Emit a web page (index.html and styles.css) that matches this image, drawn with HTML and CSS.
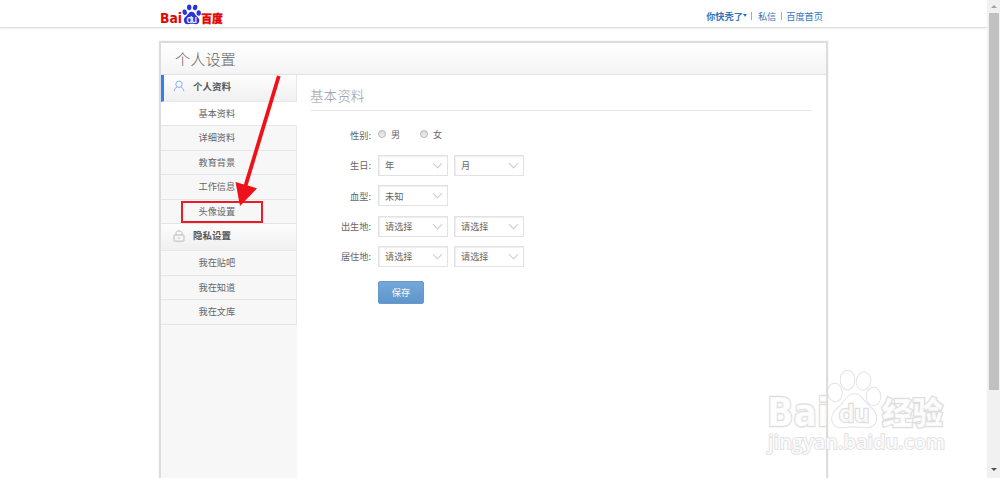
FILE: index.html
```html
<!DOCTYPE html>
<html lang="zh-CN">
<head>
  <meta charset="UTF-8">
  <title>个人设置</title>
  <link rel="stylesheet" href="styles.css">
</head>
<body>
  <div class="page">
    <div class="topbar">
      <a class="logo" href="#">
        <svg width="64" height="24" viewBox="0 0 64 24">
          <text class="logo-red logo-bai" x="0" y="20.300" font-size="13.500" textLength="22" lengthAdjust="spacingAndGlyphs">Bai</text>
          <g fill="#2932e1">
            <ellipse cx="24.700" cy="9.200" rx="2.200" ry="2.800" transform="rotate(-10 24.700 9.200)"/>
            <ellipse cx="29.200" cy="4.300" rx="2.200" ry="2.900"/>
            <ellipse cx="35.100" cy="4.500" rx="2.200" ry="2.800" transform="rotate(12 35.100 4.500)"/>
            <ellipse cx="38.700" cy="10" rx="2.200" ry="2.700"/>
            <path d="M31.600 8.800c-2.300 0-3.100 2-4.800 3.700-1.700 1.600-3.300 2.900-2.900 5.300.4 2.600 2.100 3.500 3.900 3.400 1.400-.1 2.300-.4 3.900-.4s2.600.4 4 .4c2 0 3.600-1.300 3.600-3.700 0-2.300-1.800-3.400-3.300-5.100C34.800 11 34 8.800 31.600 8.800z"/>
          </g>
          <text class="logo-du" x="26.500" y="19.500" font-size="9.500" textLength="10.500">du</text>
          <text class="logo-red" x="41.300" y="20" font-size="11.500" textLength="21.500" lengthAdjust="spacingAndGlyphs">百度</text>
        </svg>
      </a>
      <div class="user-nav">
        <a class="user-name" href="#">你快秃了<i class="caret"></i></a>
        <span class="sep sep-first"></span>
        <a href="#">私信</a>
        <span class="sep"></span>
        <a href="#">百度首页</a>
      </div>
    </div>

    <div class="panel">
      <h1>个人设置</h1>
      <div class="panel-body">
        <div class="sidebar">
          <div class="group active">
            <svg width="12" height="12" viewBox="0 0 12 12" fill="none" stroke="#82b1f5">
              <circle cx="6" cy="4.200" r="3.200"/>
              <path d="M1.200 11.200c.2-2.500 1.400-3.700 3-4.200M10.800 11.200c-.2-2.500-1.400-3.700-3-4.200"/>
            </svg>
            <span>个人资料</span>
          </div>
          <a class="item current" href="#">基本资料</a>
          <a class="item" href="#">详细资料</a>
          <a class="item" href="#">教育背景</a>
          <a class="item" href="#">工作信息</a>
          <a class="item" href="#">头像设置</a>
          <div class="group">
            <svg width="12" height="12" viewBox="0 0 12 12" fill="none" stroke="#bbb">
              <rect x="1" y="5" width="10" height="6.200" rx=".8"/>
              <path d="M3 5V3.500C3 1.800 4.200.9 6 .9s3 .9 3 2.600V5M6 7.200v1.800"/>
            </svg>
            <span>隐私设置</span>
          </div>
          <a class="item" href="#">我在贴吧</a>
          <a class="item" href="#">我在知道</a>
          <a class="item" href="#">我在文库</a>
        </div>

        <div class="content">
          <h2>基本资料</h2>
          <div class="row">
            <div class="label">性别:</div>
            <span class="radio"></span><span class="radio-text">男</span>
            <span class="radio"></span><span class="radio-text">女</span>
          </div>
          <div class="row">
            <div class="label">生日:</div>
            <div class="select">年<i></i></div>
            <div class="select">月<i></i></div>
          </div>
          <div class="row">
            <div class="label">血型:</div>
            <div class="select">未知<i></i></div>
          </div>
          <div class="row">
            <div class="label">出生地:</div>
            <div class="select">请选择<i></i></div>
            <div class="select">请选择<i></i></div>
          </div>
          <div class="row">
            <div class="label">居住地:</div>
            <div class="select">请选择<i></i></div>
            <div class="select">请选择<i></i></div>
          </div>
          <button class="save">保存</button>
        </div>
      </div>
    </div>
  </div>

  <div class="scrollbar">
    <div class="arrow up"></div>
    <div class="thumb"></div>
    <div class="arrow down"></div>
  </div>

  <!-- red box and arrow pointing at 头像设置 -->
  <svg class="marker" width="1000" height="478" viewBox="0 0 1000 478">
    <rect x="182" y="202" width="80" height="20" fill="none" stroke="#ed1c24" stroke-width="2"/>
    <path d="M277 75.500l3.600 1.100-33 108.800 9.400 3-17 17.600-4.500-24 8.400 2.600z" fill="#ed1219"/>
  </svg>

  <svg class="watermark" width="190" height="95" viewBox="0 0 190 95">
    <text class="wm-text wm-latin" x="1" y="66" font-size="39" textLength="62" lengthAdjust="spacingAndGlyphs">Bai</text>
    <g class="wm-shape">
      <ellipse cx="69" cy="32.500" rx="7" ry="9" transform="rotate(-6 69 32.500)"/>
      <ellipse cx="81.500" cy="20" rx="7" ry="9.500"/>
      <ellipse cx="97.500" cy="21" rx="7" ry="9" transform="rotate(10 97.500 21)"/>
      <ellipse cx="107.500" cy="36.500" rx="7" ry="9"/>
      <path d="M88.500 34c-6 0-8.500 5-12 9.500C72 48.500 66 51.500 66 58.500c0 7 5.500 9.500 11.500 9 4-.4 7-1 11-1s7 .8 11 1c6.500.2 11-3.500 11-9.500 0-7-6-10-10.500-15-3.500-4-5.500-9-11.500-9z"/>
    </g>
    <text class="wm-text wm-du" x="73" y="62" font-size="24" textLength="30" lengthAdjust="spacingAndGlyphs">du</text>
    <text class="wm-text" x="116" y="63.500" font-size="31" textLength="61" lengthAdjust="spacingAndGlyphs">经验</text>
    <text class="wm-url" x="2" y="89" font-size="19" textLength="177" lengthAdjust="spacingAndGlyphs">jingyan.baidu.com</text>
  </svg>
</body>
</html>
```

FILE: styles.css
```css
body {
  margin: 0;
  height: 478px;
  display: flex;
  overflow: hidden;
  background: #fff;
  color: #666;
  font-family: "Noto Sans CJK SC", sans-serif;
  font-size: 9.2px;
}

a {
  color: inherit;
  text-decoration: none;
}

.page {
  width: 987px;
  height: 478px;
  overflow: hidden;
}

/* Top bar */
.topbar {
  height: 27px;
  padding: 0 164px 0 160px;
  display: flex;
  justify-content: space-between;
  border-bottom: 1px solid #dedede;
  box-shadow: 0 1px 2px #eee;
}

.logo {
  display: block;
  height: 24px;
  padding-top: 3px;
}

.logo svg {
  display: block;
}

.logo-red {
  fill: #e10602;
  stroke: #e10602;
  stroke-width: 0.3px;
  font-family: "Noto Sans CJK SC", sans-serif;
  font-weight: 900;
}

.logo-bai {
  stroke: none;
  font-family: "DejaVu Sans", sans-serif;
  font-weight: 700;
}

.logo-du {
  fill: #fff;
  font-family: Inter, sans-serif;
  font-weight: 500;
}

.user-nav {
  display: flex;
  align-items: center;
  height: 31px;
  color: #3474bd;
}

.user-name {
  display: flex;
  align-items: center;
  font-weight: 700;
}

.caret {
  border: 2.5px solid transparent;
  border-top: 3px solid #3474bd;
  border-bottom: 0;
}

.sep {
  width: 1px;
  height: 8px;
  margin: 0 4px 0 5px;
  background: #aaa;
}

.sep-first {
  margin: 0 6px 0 4px;
}

/* Settings panel */
.panel {
  width: 665px;
  height: 440px;
  margin: 13px 0 0 159px;
  border: 2px solid #dcdcdc;
  border-bottom: 0;
  box-shadow: 0 0 1px #ddd;
}

h1 {
  height: 31px;
  margin: 0;
  padding-left: 14px;
  border-bottom: 1px solid #e2e2e2;
  background: linear-gradient(#fff, #f4f4f4);
  font-size: 15.2px;
  font-weight: 300;
  line-height: 31px;
}

.panel-body {
  display: flex;
  height: 410px;
}

.sidebar {
  width: 136px;
  background: #f7f7f7;
}

.group {
  display: flex;
  align-items: center;
  box-sizing: border-box;
  height: 27px;
  padding: 0 0 4px 12px;
  border-right: 1px solid #e8e8e8;
  border-bottom: 1px solid #e8e8e8;
  background: linear-gradient(#fdfdfd, #f0f0f0);
  color: #555;
  font-size: 9.5px;
  font-weight: 700;
}

.group.active {
  height: 26.5px;
  padding-left: 9px;
  border-left: 3px solid #2f80f5;
}

.group svg {
  margin: 1px 8px 0 0;
}

.item {
  display: block;
  box-sizing: border-box;
  height: 24.5px;
  padding-left: 37.5px;
  border-right: 1px solid #e8e8e8;
  border-bottom: 1px solid #e3e6e9;
  line-height: 23px;
}

.item.current {
  border-right-color: #fff;
  background: #fff;
}

/* Form */
.content {
  flex: 1;
  padding: 0 14px 0 13px;
}

h2 {
  height: 35px;
  margin: 0 0 9px;
  border-bottom: 1px solid #e8e8e8;
  color: #999;
  font-size: 13.6px;
  font-weight: 300;
  line-height: 40px;
}

.row {
  display: flex;
  align-items: center;
  height: 30.3px;
}

.label {
  width: 61px;
  margin-right: 7px;
  text-align: right;
}

.select {
  display: flex;
  align-items: center;
  justify-content: space-between;
  box-sizing: border-box;
  width: 70px;
  height: 21px;
  margin-right: 6px;
  padding: 0 6px;
  border: 1px solid #e2e2e2;
  box-shadow: inset 1px 1px 1px #eee;
}

.select i {
  width: 6px;
  height: 6px;
  margin-top: -4px;
  border: solid #ccc;
  border-width: 0 1px 1px 0;
  transform: rotate(45deg);
}

.radio {
  box-sizing: border-box;
  width: 8px;
  height: 8px;
  margin-top: -2px;
  border: 1px solid #b5b5b5;
  border-radius: 50%;
  background: linear-gradient(#ddd, #eee);
}

.radio-text {
  width: 29px;
  margin: -2px 0 0 5px;
}

.save {
  display: block;
  width: 46px;
  height: 23px;
  margin: 10px 0 0 68px;
  padding: 0 0 1px;
  border: 1px solid #669ace;
  border-radius: 2px;
  background: linear-gradient(#74a8da, #6095c9);
  color: #fff;
  font: inherit;
}

/* Scrollbar */
.scrollbar {
  display: flex;
  flex-direction: column;
  align-items: center;
  width: 13px;
  height: 478px;
  background: #f1f1f1;
}

.thumb {
  width: 10px;
  height: 377px;
  margin: 5px 0 78px;
  background: #c1c1c1;
}

.arrow {
  border: 3px solid transparent;
}

.arrow.up {
  margin-top: 5px;
  border-top: 0;
  border-bottom-color: #a3a3a3;
}

.arrow.down {
  border-bottom: 0;
  border-top-color: #505050;
}

/* Overlays */
.marker {
  position: absolute;
  top: 0;
  left: 0;
  pointer-events: none;
}

.watermark {
  position: absolute;
  top: 360px;
  left: 766px;
  pointer-events: none;
}

.wm-shape,
.wm-text,
.wm-url {
  fill: #fff;
  fill-opacity: 0.85;
  stroke: #dedede;
  stroke-width: 1.6px;
  paint-order: stroke;
}

.wm-shape {
  stroke-width: 1.5px;
}

.wm-text {
  stroke-width: 2.4px;
  font-family: "Noto Sans CJK SC", sans-serif;
  font-weight: 900;
}

.wm-latin {
  font-family: "DejaVu Sans", sans-serif;
  font-weight: 700;
}

.wm-du {
  font-family: Inter, sans-serif;
  font-weight: 600;
}

.wm-url {
  font-family: "Open Sans", sans-serif;
  font-weight: 600;
}
```
